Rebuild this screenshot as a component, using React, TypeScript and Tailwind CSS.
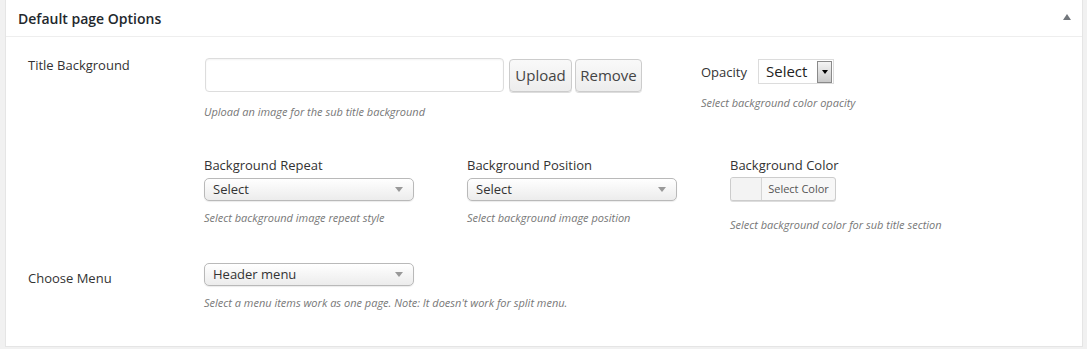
const font = { fontFamily: '"Open Sans", "Liberation Sans", sans-serif' };

function Help({ children, className = "" }: { children: React.ReactNode; className?: string }) {
  return (
    <p className={`text-[11px] italic leading-[16px] text-[#777] ${className}`}>{children}</p>
  );
}

function Dropdown({ value }: { value: string }) {
  return (
    <div className="flex h-[23px] w-[210px] items-center justify-between rounded-[5px] border border-[#b9b9b9] bg-gradient-to-b from-white to-[#ececec] pl-[8px] pr-[10px] shadow-[0_1px_1px_rgba(0,0,0,0.08)]">
      <span className="text-[13px] leading-none text-[#333]">{value}</span>
      <span className="h-0 w-0 border-x-[4px] border-t-[5px] border-x-transparent border-t-[#999]" />
    </div>
  );
}

export default function App() {
  return (
    <div className="h-[349px] w-[1087px] bg-[#f1f1f1] pl-[5px] pr-[4px]" style={font}>
      <div className="h-[347px] border-x border-b border-[#e5e5e5] bg-white">
        {/* header */}
        <div className="flex h-[37px] items-center justify-between border-b border-[#eeeeee] pl-[12px] pr-[11px]">
          <h2 className="text-[14px] font-semibold text-[#23282d]">Default page Options</h2>
          <span className="mt-[-2px] h-0 w-0 border-x-[4px] border-b-[6px] border-x-transparent border-b-[#72777c]" />
        </div>

        <div className="pl-[22px] pt-[20px]">
          {/* title background row */}
          <div className="flex items-start">
            <div className="w-[176px] text-[13px] leading-[16px] text-[#333]">Title Background</div>
            <div className="w-[497px]">
              <div className="mt-[1px] flex items-start">
                <div className="ml-[1px] h-[34px] w-[299px] rounded-[4px] border border-[#dddddd] bg-white shadow-[inset_0_1px_2px_rgba(0,0,0,0.05)]" />
                <button className="ml-[5px] mt-[1px] h-[33px] w-[63px] rounded-[4px] border border-[#cccccc] bg-gradient-to-b from-[#f9f9f9] to-[#ededed] text-[15px] text-[#444] shadow-[0_1px_0_#ddd]">
                  Upload
                </button>
                <button className="ml-[3px] mt-[1px] h-[33px] w-[67px] rounded-[4px] border border-[#cccccc] bg-gradient-to-b from-[#f9f9f9] to-[#ededed] text-[15px] text-[#444] shadow-[0_1px_0_#ddd]">
                  Remove
                </button>
              </div>
              <Help className="mt-[12px]">Upload an image for the sub title background</Help>
            </div>
            <div className="mt-[2px]">
              <div className="flex items-center">
                <span className="w-[57px] text-[13px] leading-[16px] text-[#333]">Opacity</span>
                <div className="flex h-[25px] w-[76px] items-center justify-between border border-[#dcdcdc] bg-white pl-[7px] pr-[1px]">
                  <span className="text-[15px] leading-none text-[#222]">Select</span>
                  <span className="flex h-[22px] w-[15px] items-center justify-center border border-[#8a8a8a] bg-gradient-to-b from-[#f4f4f4] to-[#c9c9c9]">
                    <span className="h-0 w-0 border-x-[3px] border-t-[4px] border-x-transparent border-t-black" />
                  </span>
                </div>
              </div>
              <Help className="mt-[11px]">Select background color opacity</Help>
            </div>
          </div>

          {/* background options */}
          <div className="ml-[176px] mt-[37px] grid w-[800px] grid-cols-[263px_263px_1fr]">
            <div>
              <div className="text-[13px] leading-[16px] text-[#333]">Background Repeat</div>
              <div className="mt-[5px]">
                <Dropdown value="Select" />
              </div>
              <Help className="mt-[9px]">Select background image repeat style</Help>
            </div>
            <div>
              <div className="text-[13px] leading-[16px] text-[#333]">Background Position</div>
              <div className="mt-[5px]">
                <Dropdown value="Select" />
              </div>
              <Help className="mt-[9px]">Select background image position</Help>
            </div>
            <div>
              <div className="text-[13px] leading-[16px] text-[#333]">Background Color</div>
              <div className="mt-[4px] flex h-[24px] w-[106px] overflow-hidden rounded-[3px] border border-[#cccccc] bg-[#f7f7f7] shadow-[0_1px_0_#ddd]">
                <span className="w-[31px] border-r border-[#d5d5d5] bg-[#f3f3f3]" />
                <span className="flex flex-1 items-center justify-center text-[11px] text-[#555]">Select Color</span>
              </div>
              <Help className="mt-[16px]">Select background color for sub title section</Help>
            </div>
          </div>

          {/* menu row */}
          <div className="mt-[30px] flex items-start">
            <div className="mt-[7px] w-[176px] text-[13px] leading-[16px] text-[#333]">Choose Menu</div>
            <div>
              <Dropdown value="Header menu" />
              <Help className="mt-[9px]">Select a menu items work as one page. Note: It doesn't work for split menu.</Help>
            </div>
          </div>
        </div>
      </div>
    </div>
  );
}
